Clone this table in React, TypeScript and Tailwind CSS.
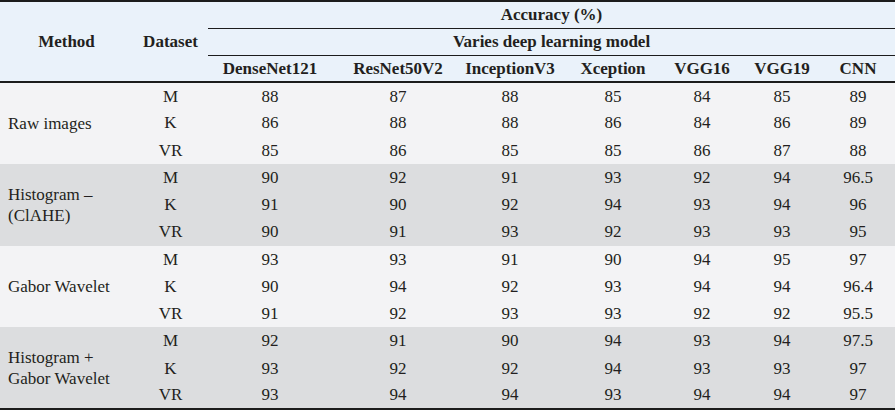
const models = ["DenseNet121", "ResNet50V2", "InceptionV3", "Xception", "VGG16", "VGG19", "CNN"];

const groups = [
  {
    method: ["Raw images"],
    bg: "bg-[#f3f3f5]",
    rows: [
      ["M", "88", "87", "88", "85", "84", "85", "89"],
      ["K", "86", "88", "88", "86", "84", "86", "89"],
      ["VR", "85", "86", "85", "85", "86", "87", "88"],
    ],
  },
  {
    method: ["Histogram –", "(ClAHE)"],
    bg: "bg-[#dcdddf]",
    rows: [
      ["M", "90", "92", "91", "93", "92", "94", "96.5"],
      ["K", "91", "90", "92", "94", "93", "94", "96"],
      ["VR", "90", "91", "93", "92", "93", "93", "95"],
    ],
  },
  {
    method: ["Gabor Wavelet"],
    bg: "bg-[#f3f3f5]",
    rows: [
      ["M", "93", "93", "91", "90", "94", "95", "97"],
      ["K", "90", "94", "92", "93", "94", "94", "96.4"],
      ["VR", "91", "92", "93", "93", "92", "92", "95.5"],
    ],
  },
  {
    method: ["Histogram +", "Gabor Wavelet"],
    bg: "bg-[#dcdddf]",
    rows: [
      ["M", "92", "91", "90", "94", "93", "94", "97.5"],
      ["K", "93", "92", "92", "94", "93", "93", "97"],
      ["VR", "93", "94", "94", "93", "94", "94", "97"],
    ],
  },
];

const App = () => {
  return (
    <div className="w-[895px] h-[410px] bg-white overflow-hidden font-['Liberation_Serif','Times_New_Roman',serif]">
      <table className="w-[895px] table-fixed border-collapse text-[17px] leading-none text-[#231f20] font-['Liberation_Serif','Times_New_Roman',serif]">
        <colgroup>
          <col className="w-[133px]" />
          <col className="w-[75px]" />
          <col className="w-[124px]" />
          <col className="w-[132px]" />
          <col className="w-[92px]" />
          <col className="w-[114px]" />
          <col className="w-[64px]" />
          <col className="w-[96px]" />
          <col className="w-[65px]" />
        </colgroup>
        <thead className="bg-[#eaf2fa] font-bold">
          <tr className="h-[27px] border-t-2 border-[#1c1c1c]">
            <th rowSpan={3} className="p-0 text-center align-middle border-b-2 border-[#1c1c1c]">
              Method
            </th>
            <th rowSpan={3} className="p-0 text-center align-middle border-b-2 border-[#1c1c1c]">
              Dataset
            </th>
            <th colSpan={7} className="p-0 text-center border-b border-[#1c1c1c]">
              Accuracy (%)
            </th>
          </tr>
          <tr className="h-[27px]">
            <th colSpan={7} className="p-0 text-center border-b border-[#1c1c1c]">
              Varies deep learning model
            </th>
          </tr>
          <tr className="h-[27px]">
            {models.map((m, i) => (
              <th
                key={m}
                className={`p-0 text-center whitespace-nowrap border-b-2 border-[#1c1c1c] ${i === 6 ? "pr-[9px]" : ""}`}
              >
                {m}
              </th>
            ))}
          </tr>
        </thead>
        {groups.map((g, gi) => (
          <tbody key={gi} className={`${g.bg} ${gi === groups.length - 1 ? "border-b-2 border-[#1c1c1c]" : ""}`}>
            {g.rows.map((r, ri) => (
              <tr key={ri} className="h-[27.25px]">
                {ri === 0 && (
                  <td rowSpan={3} className="p-0 pl-2 text-left align-middle leading-[21px]">
                    {g.method.map((line) => (
                      <div key={line}>{line}</div>
                    ))}
                  </td>
                )}
                {r.map((v, vi) => (
                  <td key={vi} className={`p-0 text-center ${vi === 7 ? "pr-[9px]" : ""}`}>
                    {v}
                  </td>
                ))}
              </tr>
            ))}
          </tbody>
        ))}
      </table>
    </div>
  );
};

export default App;
